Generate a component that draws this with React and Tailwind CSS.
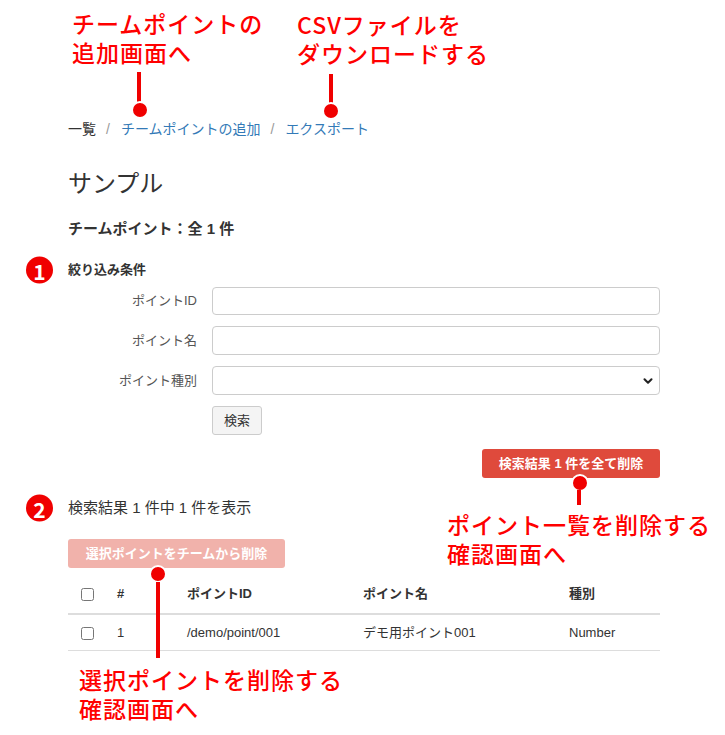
import { ChevronDown } from "lucide-react";

const note = "absolute flex flex-col text-[#ff0000] text-[23px] leading-[29px] tracking-[1px] [font-family:'Noto_Sans_CJK_JP',sans-serif] font-medium whitespace-nowrap";

// red callout pin: dot with white ring + stem
const Dot = ({ x, y }) => (
  <div
    className="absolute w-[18px] h-[18px] rounded-full bg-[#f00000] border-2 border-white"
    style={{ left: x - 9, top: y - 9 }}
  />
);

const Stem = ({ x, y1, y2 }) => (
  <div className="absolute w-[4px] bg-[#f00000]" style={{ left: x - 2, top: y1, height: y2 - y1 }} />
);

const Badge = ({ n }) => (
  <div className="absolute left-[-42px] top-1/2 -translate-y-1/2 w-[27px] h-[27px] rounded-full bg-[#f00000] text-white flex items-center justify-center text-[21px] font-bold [font-family:'Noto_Sans_CJK_JP',sans-serif]">
    {n}
  </div>
);

const Field = ({ label, children }) => (
  <div className="flex items-center gap-[15px]">
    <label className="w-[129px] text-right text-[13px] text-[#555]">{label}</label>
    {children}
  </div>
);

export default function App() {
  return (
    <div className="relative w-[725px] h-[735px] bg-white text-[#333] [font-family:'Liberation_Sans','Noto_Sans_CJK_JP',sans-serif]">
      <div className="pl-[68px] pr-[65px] pt-[119px]">
        {/* breadcrumb */}
        <div className="flex items-center text-[14px] leading-[20px]">
          <span>一覧</span>
          <span className="pl-[10px] pr-[11px] text-[#999]">/</span>
          <span className="text-[#337ab7]">チームポイントの追加</span>
          <span className="pl-[10px] pr-[11px] text-[#999]">/</span>
          <span className="text-[#337ab7]">エクスポート</span>
        </div>

        <h1 className="mt-[32px] text-[24px] leading-[26px]">サンプル</h1>
        <h2 className="mt-[22px] text-[15px] leading-[20px] font-bold">チームポイント：全 1 件</h2>

        <div className="relative mt-[22px] text-[13px] leading-[18px] font-bold">
          <Badge n="1" />
          絞り込み条件
        </div>

        <div className="mt-[8px] flex flex-col gap-[11px]">
          <Field label="ポイントID">
            <input className="flex-1 h-[28px] border border-[#ccc] rounded-[4px]" />
          </Field>
          <Field label="ポイント名">
            <input className="flex-1 h-[29px] border border-[#ccc] rounded-[4px]" />
          </Field>
          <Field label="ポイント種別">
            <div className="flex-1 h-[29px] border border-[#ccc] rounded-[4px] flex items-center justify-end pr-[4px]">
              <ChevronDown size={14} strokeWidth={3.5} className="text-[#222]" />
            </div>
          </Field>
        </div>

        <div className="mt-[11px] pl-[144px]">
          <button className="w-[50px] h-[29px] border border-[#ccc] rounded-[3px] bg-[#f4f4f4] text-[13px] text-[#333]">
            検索
          </button>
        </div>

        <div className="mt-[14px] flex justify-end">
          <button className="w-[178px] h-[29px] rounded-[3px] bg-[#df4a3c] text-white text-[13px] font-bold">
            検索結果 1 件を全て削除
          </button>
        </div>

        <div className="relative mt-[20px] text-[15px] leading-[20px]">
          <Badge n="2" />
          検索結果 1 件中 1 件を表示
        </div>

        <button className="mt-[21px] w-[217px] h-[29px] rounded-[3px] bg-[#f1b2ab] text-white text-[13px] font-bold">
          選択ポイントをチームから削除
        </button>

        <table className="w-full table-fixed text-[13px] text-left">
          <thead>
            <tr className="border-b-2 border-[#ddd] h-[46px] align-bottom">
              <th className="pl-[13px] pb-[10px] w-[49px]"><input type="checkbox" className="m-0 w-[13px] h-[13px] align-middle" /></th>
              <th className="pb-[10px] w-[70px]">#</th>
              <th className="pb-[10px] w-[176px]">ポイントID</th>
              <th className="pb-[10px] w-[206px]">ポイント名</th>
              <th className="pb-[10px]">種別</th>
            </tr>
          </thead>
          <tbody>
            <tr className="border-b border-[#ddd] h-[36px]">
              <td className="pl-[13px]"><input type="checkbox" className="m-0 w-[13px] h-[13px] align-middle" /></td>
              <td>1</td>
              <td>/demo/point/001</td>
              <td>デモ用ポイント001</td>
              <td>Number</td>
            </tr>
          </tbody>
        </table>
      </div>

      {/* annotations */}
      <div className={note} style={{ left: 72, top: 9 }}><span>チームポイントの</span><span>追加画面へ</span></div>
      <Stem x={139} y1={72} y2={102} />
      <Dot x={140} y={110} />

      <div className={note} style={{ left: 297, top: 10 }}><span>CSVファイルを</span><span>ダウンロードする</span></div>
      <Stem x={331} y1={74} y2={103} />
      <Dot x={331} y={111} />

      <Dot x={580} y={483} />
      <Stem x={579} y1={490} y2={505} />
      <div className={note} style={{ left: 447, top: 510 }}><span>ポイント一覧を削除する</span><span>確認画面へ</span></div>

      <Dot x={158} y={574} />
      <Stem x={158} y1={582} y2={658} />
      <div className={note} style={{ left: 79, top: 665 }}><span>選択ポイントを削除する</span><span>確認画面へ</span></div>
    </div>
  );
}
